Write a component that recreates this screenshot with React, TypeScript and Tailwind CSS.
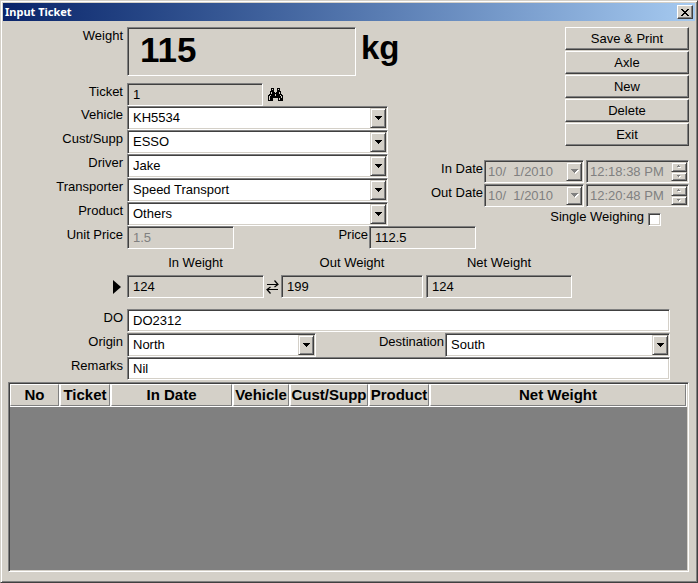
import { useId, useState } from "react";
import type { ReactNode } from "react";
import clsx from "clsx";

const SUNKEN =
  "border border-t-[#808080] border-l-[#808080] border-r-white border-b-white shadow-[inset_1px_1px_0_#404040,inset_-1px_-1px_0_#d4d0c8]";
const RAISED =
  "bg-[#d4d0c8] border border-t-white border-l-white border-r-[#404040] border-b-[#404040] shadow-[inset_-1px_-1px_0_#808080]";
const RAISED_INNER =
  "bg-[#d4d0c8] border border-t-[#d4d0c8] border-l-[#d4d0c8] border-r-[#404040] border-b-[#404040] shadow-[inset_1px_1px_0_#ffffff,inset_-1px_-1px_0_#808080]";

const ACTIONS = ["Save & Print", "Axle", "New", "Delete", "Exit"];

const LOOKUPS = [
  { label: "Vehicle", value: "KH5534" },
  { label: "Cust/Supp", value: "ESSO" },
  { label: "Driver", value: "Jake" },
  { label: "Transporter", value: "Speed Transport" },
  { label: "Product", value: "Others" },
];

const COLUMNS = [
  { title: "No", width: "w-[50px]" },
  { title: "Ticket", width: "w-[51px]" },
  { title: "In Date", width: "w-[122px]" },
  { title: "Vehicle", width: "w-[57px]" },
  { title: "Cust/Supp", width: "w-[79px]" },
  { title: "Product", width: "w-[61px]" },
  { title: "Net Weight", width: "" },
];

const BINOCULARS = [
  "...XXX...XXX...",
  "...X.X...X.X...",
  "...XXX...XXX...",
  "..XXXX...XXXX..",
  "..X.XXX.XXX.X..",
  "..X.XXXXXXX.X..",
  ".XXXXXX.XXXXXX.",
  "XX.XXXX.XXXX.XX",
  "X.XXXXXXXXXXX.X",
  "X.XXXXXXXXXXX.X",
  "X.XXX.....X.XXX",
  "X.XXX.....X.XXX",
  "XXXXX.....XXXXX",
];

function Binoculars() {
  return (
    <svg width="15" height="13" viewBox="0 0 15 13" shapeRendering="crispEdges" aria-hidden>
      {BINOCULARS.flatMap((row, y) =>
        [...row].map((c, x) =>
          c === "X" ? <rect key={`${x}-${y}`} x={x} y={y} width="1" height="1" /> : null,
        ),
      )}
    </svg>
  );
}

function DownArrow({ disabled = false }: { disabled?: boolean }) {
  return (
    <svg width="8" height="5" viewBox="0 0 8 5" shapeRendering="crispEdges" aria-hidden>
      {disabled && <path d="M1 1h7v1h-1v1h-1v1h-1v1h-1v-1h-1v-1h-1v-1h-1z" fill="#fff" />}
      <path d="M0 0h7v1h-1v1h-1v1h-1v1h-1v-1h-1v-1h-1v-1h-1z" fill={disabled ? "#808080" : "#000"} />
    </svg>
  );
}

interface FieldProps {
  id: string;
  value: string;
  className?: string;
  readOnly?: boolean;
  disabled?: boolean;
}

function TextField({ id, value, className, readOnly, disabled }: FieldProps) {
  return (
    <input
      id={id}
      type="text"
      defaultValue={value}
      readOnly={readOnly}
      disabled={disabled}
      className={clsx(
        SUNKEN,
        "h-[23px] min-w-0 px-[5px] leading-4 outline-none",
        readOnly || disabled ? "bg-[#d4d0c8]" : "bg-white",
        disabled && "text-[#808080]",
        className,
      )}
    />
  );
}

function Combo({ id, value, className }: FieldProps) {
  return (
    <div className={clsx(SUNKEN, "grid h-6 bg-white p-px", className)}>
      <select
        id={id}
        defaultValue={value}
        className="col-start-1 row-start-1 w-full appearance-none pr-5 pl-1 leading-4 outline-none"
      >
        <option>{value}</option>
      </select>
      <span
        className={clsx(
          RAISED_INNER,
          "pointer-events-none col-start-1 row-start-1 flex w-4 items-center justify-center justify-self-end pl-px",
        )}
      >
        <DownArrow />
      </span>
    </div>
  );
}

function Label({ htmlFor, children }: { htmlFor: string; children: ReactNode }) {
  return (
    <label htmlFor={htmlFor} className="w-[120px] shrink-0 pt-px text-right">
      {children}
    </label>
  );
}

function SpinButton({ up = false, label }: { up?: boolean; label: string }) {
  return (
    <button
      type="button"
      disabled
      aria-label={label}
      className={clsx(RAISED_INNER, "flex flex-1 items-center justify-center")}
    >
      <svg width="4" height="3" viewBox="0 0 4 3" shapeRendering="crispEdges" aria-hidden>
        <path d={up ? "M1 1h1v1h2v1h-3z" : "M1 1h3v1h-1v1h-1v-1h-1z"} fill="#fff" />
        <path d={up ? "M1 0h1v1h1v1h-3v-1h1z" : "M0 0h3v1h-1v1h-1v-1h-1z"} fill="#808080" />
      </svg>
    </button>
  );
}

function DateTimeRow({ label, date, time }: { label: string; date: string; time: string }) {
  const id = useId();
  return (
    <div className="flex">
      <label htmlFor={id} className="pt-px pr-px">
        {label}
      </label>
      <div className={clsx(SUNKEN, "mr-0.5 flex h-[23px] w-[100px] p-px")}>
        <input
          id={id}
          type="text"
          disabled
          defaultValue={date}
          className="w-0 flex-1 pl-0.5 text-[#808080]"
        />
        <button
          type="button"
          disabled
          aria-label={`${label} calendar`}
          className={clsx(RAISED_INNER, "flex w-4 items-center justify-center pl-px")}
        >
          <DownArrow disabled />
        </button>
      </div>
      <div className={clsx(SUNKEN, "flex h-[23px] w-[103px] p-px")}>
        <input
          type="text"
          disabled
          defaultValue={time}
          aria-label={`${label} time`}
          className="w-0 flex-1 pl-0.5 text-[#808080]"
        />
        <div className="flex w-4 flex-col">
          <SpinButton up label={`${label} time up`} />
          <SpinButton label={`${label} time down`} />
        </div>
      </div>
    </div>
  );
}

function TitleBar() {
  return (
    <header className="flex h-[18px] items-center justify-between bg-linear-to-r from-[#0a246a] to-[#a6caf0] pr-0.5 pl-0.5">
      <h1 className="font-['Noto_Sans',sans-serif] text-[11px] leading-4 font-bold text-white">
        Input Ticket
      </h1>
      <button
        type="button"
        aria-label="Close"
        className={clsx(RAISED, "flex h-3.5 w-4 items-center justify-center")}
      >
        <svg width="8" height="7" viewBox="0 0 8 7" shapeRendering="crispEdges" aria-hidden>
          <path d="M0 0h2v1h1v1h2v-1h1v-1h2v1h-1v1h-1v1h-1v1h1v1h1v1h1v1h-2v-1h-1v-1h-2v1h-1v1h-2v-1h1v-1h1v-1h1v-1h-1v-1h-1v-1h-1z" />
        </svg>
      </button>
    </header>
  );
}

function WeightsRow() {
  return (
    <div className="mt-1.5 grid grid-cols-[124px_137px_17px_142px_3px_146px] items-center gap-y-1 text-center">
      <label htmlFor="in-weight" className="col-start-2">
        In Weight
      </label>
      <label htmlFor="out-weight" className="col-start-4">
        Out Weight
      </label>
      <label htmlFor="net-weight" className="col-start-6">
        Net Weight
      </label>
      <button type="button" aria-label="Capture weight" className="mr-1.5 justify-self-end">
        <svg width="8" height="14" viewBox="0 0 8 14" aria-hidden>
          <path d="M0 0L8 7L0 14z" />
        </svg>
      </button>
      <TextField id="in-weight" value="124" readOnly />
      <button type="button" aria-label="Swap weights" className="justify-self-center">
        <svg width="13" height="14" viewBox="0 0 13 14" fill="none" stroke="#000" strokeWidth="1.2" aria-hidden>
          <path d="M1 4.5h11M8.5 0.5l3.5 4l-3.5 2.5M12 9.5h-11M4.5 7l-3.5 2.5l3.5 4" />
        </svg>
      </button>
      <TextField id="out-weight" value="199" readOnly />
      <TextField id="net-weight" value="124" readOnly className="col-start-6" />
    </div>
  );
}

function TicketGrid() {
  return (
    <div className={clsx(SUNKEN, "mt-0.5 mr-1.5 mb-2 ml-[5px] flex-1 bg-[#808080] p-px")}>
      <table className="w-full table-fixed border-collapse text-[15px] leading-4 font-bold">
        <thead>
          <tr>
            {COLUMNS.map((col) => (
              <th key={col.title} scope="col" className={clsx(col.width, "p-0")}>
                <div className="border-r border-b border-white">
                  <div className="flex h-[22px] items-center justify-center border border-t-white border-r-[#808080] border-b-[#808080] border-l-white bg-[#d4d0c8] whitespace-nowrap">
                    {col.title}
                  </div>
                </div>
              </th>
            ))}
          </tr>
        </thead>
      </table>
    </div>
  );
}

export default function App() {
  const [single, setSingle] = useState(false);

  return (
    <main className="flex min-h-screen flex-col border border-t-[#d4d0c8] border-r-[#404040] border-b-[#404040] border-l-[#d4d0c8] bg-[#d4d0c8] p-0.5 font-['Liberation_Sans',Arial,sans-serif] text-[13px] leading-4 text-black shadow-[inset_1px_1px_0_#ffffff,inset_-1px_-1px_0_#808080]">
      <TitleBar />

      <div className="flex justify-between pt-1.5 pr-1.5">
        <div className="flex flex-col">
          <div className="mb-[7px] flex gap-1">
            <Label htmlFor="weight">Weight</Label>
            <input
              id="weight"
              type="text"
              readOnly
              defaultValue="115"
              className={clsx(
                SUNKEN,
                "h-[49px] w-[229px] bg-[#d4d0c8] pb-1 pl-3 text-[35px] font-bold outline-none",
              )}
            />
            <span className="pl-px text-[33px] leading-[42px] font-bold">kg</span>
          </div>
          <div className="flex gap-1">
            <Label htmlFor="ticket">Ticket</Label>
            <TextField id="ticket" value="1" readOnly className="w-[136px]" />
            <button type="button" aria-label="Find ticket" className="self-center pl-px">
              <Binoculars />
            </button>
          </div>
          {LOOKUPS.map(({ label, value }) => (
            <div key={label} className="flex gap-1">
              <Label htmlFor={label}>{label}</Label>
              <Combo id={label} value={value} className="w-[261px]" />
            </div>
          ))}
        </div>

        <div className="flex flex-col items-end">
          <div className="flex w-[124px] flex-col gap-px">
            {ACTIONS.map((action) => (
              <button key={action} type="button" className={clsx(RAISED, "h-[23px]")}>
                {action}
              </button>
            ))}
          </div>
          <div className="mt-3.5 flex flex-col items-end gap-px">
            <DateTimeRow label="In Date" date="10/  1/2010" time="12:18:38 PM" />
            <DateTimeRow label="Out Date" date="10/  1/2010" time="12:20:48 PM" />
          </div>
          <div className="mt-0.5 mr-7 flex gap-1">
            <label htmlFor="single">Single Weighing</label>
            <input
              id="single"
              type="checkbox"
              checked={single}
              onChange={(e) => setSingle(e.target.checked)}
              className={clsx(SUNKEN, "mt-1 size-[13px] appearance-none bg-white checked:bg-[#404040]")}
            />
          </div>
        </div>
      </div>

      <div className="flex">
        <div className="flex gap-1">
          <Label htmlFor="unit-price">Unit Price</Label>
          <TextField id="unit-price" value="1.5" disabled className="w-[107px]" />
        </div>
        <label htmlFor="price" className="w-[135px] pt-px pr-px text-right">
          Price
        </label>
        <TextField id="price" value="112.5" readOnly className="w-[107px]" />
      </div>

      <WeightsRow />

      <div className="mt-[11px] flex flex-col gap-px pr-[25px]">
        <div className="flex gap-1">
          <Label htmlFor="do">DO</Label>
          <TextField id="do" value="DO2312" className="flex-1" />
        </div>
        <div className="-mb-px flex gap-1">
          <Label htmlFor="origin">Origin</Label>
          <div className="flex flex-1">
            <Combo id="origin" value="North" className="w-[189px]" />
            <label htmlFor="destination" className="flex-1 pt-px pr-px text-right">
              Destination
            </label>
            <Combo id="destination" value="South" className="w-[225px]" />
          </div>
        </div>
        <div className="flex gap-1">
          <Label htmlFor="remarks">Remarks</Label>
          <TextField id="remarks" value="Nil" className="flex-1" />
        </div>
      </div>

      <TicketGrid />
    </main>
  );
}
